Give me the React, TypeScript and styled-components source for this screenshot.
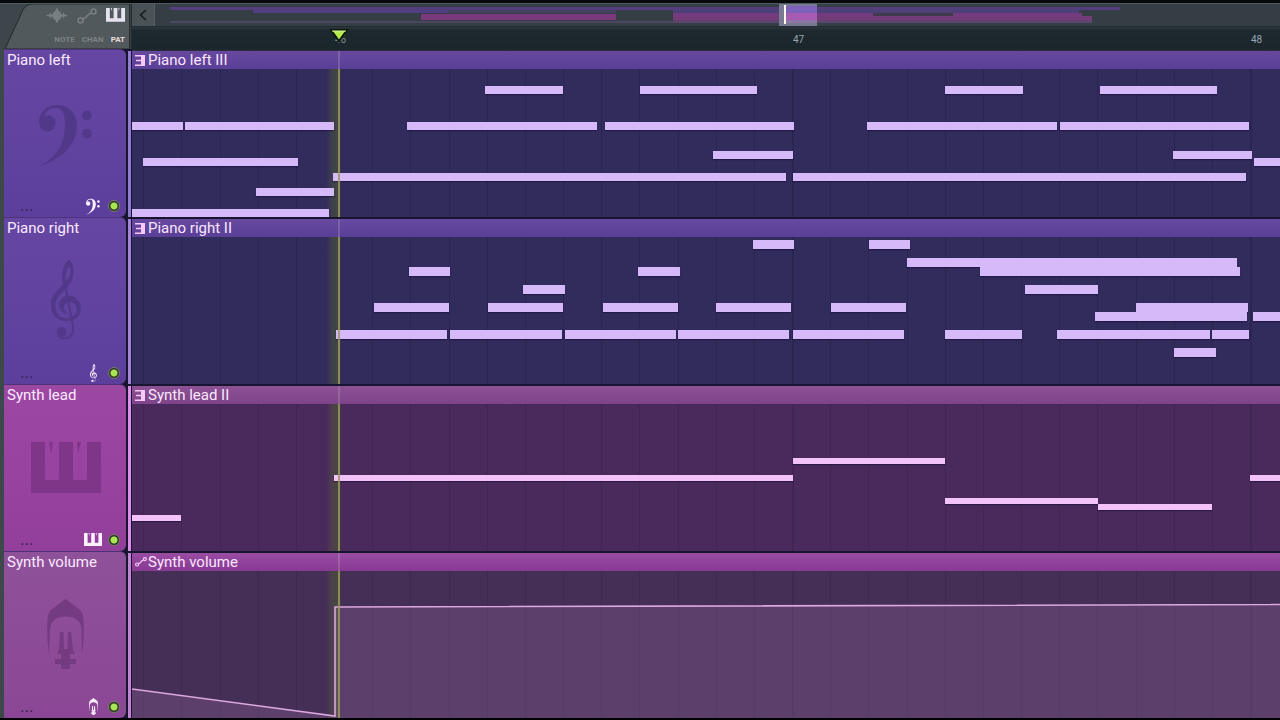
import React from "react";
import styled, { createGlobalStyle } from "styled-components";

const GlobalStyle = createGlobalStyle`
  * { box-sizing: border-box; }
  body {
    margin: 0;
    background: #000;
    font-family: Roboto, "Liberation Sans", sans-serif;
    overflow-x: hidden;
  }
  button { font: inherit; color: inherit; background: none; border: 0; padding: 0; margin: 0; cursor: pointer; }
`;

/* ---------- data ---------- */

type IconName = "bass" | "treble" | "keys" | "bulb";
type Note = [start: number, end: number, top: number];

interface Track {
  name: string;
  clip: string;
  icon: IconName;
  height: number;
  panel: [string, string];
  strip: string;
  head: [string, string];
  body: string;
  line: string;
  mark: string;
  noteColor: string;
  noteHeight: number;
  notes: Note[];
  automation?: boolean;
}

const tracks: Track[] = [
  {
    name: "Piano left", clip: "Piano left III", icon: "bass", height: 168,
    panel: ["#6646a3", "#5c3f9c"], strip: "#8f7bd0", head: ["#67499f", "#5a3f97"],
    body: "#322c5d", line: "#2b2552", mark: "#513889", noteColor: "#d5b9f9", noteHeight: 8,
    notes: [
      [353, 431, 17], [508, 625, 17], [813, 891, 17], [968, 1085, 17],
      [0, 51, 53], [53, 202, 53], [275, 465, 53], [473, 662, 53], [735, 925, 53], [928, 1117, 53],
      [581, 661, 82], [1041, 1120, 82], [11, 166, 89], [1122, 1160, 89],
      [201, 654, 104], [661, 1114, 104], [124, 202, 119], [0, 197, 140],
    ],
  },
  {
    name: "Piano right", clip: "Piano right II", icon: "treble", height: 167,
    panel: ["#6646a3", "#5c3f9c"], strip: "#a384d8", head: ["#67499f", "#5a3f97"],
    body: "#322c5d", line: "#2b2552", mark: "#513889", noteColor: "#d5b9f9", noteHeight: 9,
    notes: [
      [621, 662, 3], [737, 778, 3], [775, 1105, 21], [848, 1108, 30], [277, 318, 30], [506, 548, 30],
      [391, 433, 48], [893, 966, 48], [242, 317, 66], [356, 431, 66], [471, 546, 66], [584, 659, 66],
      [699, 774, 66], [1004, 1116, 66], [963, 1115, 75], [1121, 1160, 75],
      [204, 315, 93], [318, 430, 93], [433, 544, 93], [546, 657, 93], [661, 772, 93], [813, 890, 93],
      [925, 1078, 93], [1080, 1117, 93], [1042, 1084, 111],
    ],
  },
  {
    name: "Synth lead", clip: "Synth lead II", icon: "keys", height: 167,
    panel: ["#9c48a3", "#923e9b"], strip: "#dd8ee6", head: ["#8d5194", "#7e4489"],
    body: "#4a2a5c", line: "#432553", mark: "#7f3689", noteColor: "#f3c2f9", noteHeight: 6,
    notes: [
      [661, 813, 54], [202, 661, 71], [1118, 1160, 71], [813, 966, 94], [966, 1080, 100], [0, 49, 111],
    ],
  },
  {
    name: "Synth volume", clip: "Synth volume", icon: "bulb", height: 167,
    panel: ["#8f519a", "#8b4795"], strip: "#c283d0", head: ["#994ca2", "#883a93"],
    body: "#462f57", line: "#3f294f", mark: "#743b83", noteColor: "#e9b9ee", noteHeight: 6,
    notes: [], automation: true,
  },
];

const BAR = 458;
const FIRST_BAR = 203;
const gridLines = Array.from({ length: 100 }, (_, i) => ({
  x: FIRST_BAR - 1 + Math.round(((i - 5) * BAR) / 12),
  bar: (i - 5) % 12 === 0,
}));

/* ---------- icons ---------- */

const BassIcon = ({ size }: { size: number }) => (
  <svg width={size} height={size * 1.26} viewBox="0 -7 54 68" fill="currentColor" aria-hidden="true">
    <path d="M1 61C18 52 26 39 26 20C26 8 23 3 17 3C11 3 6 6 5 12C7 10.500 9 10 11 10.500C15 11.500 17 15 16.500 19C16 23.500 12.500 26.500 8.500 26.500C3.500 26.500 0 22.500 0 17C0 7 8 0 18 0C30 0 38 8 38 21C38 41 20 55 1 61Z" />
    <circle cx="48" cy="10.500" r="4.800" />
    <circle cx="48" cy="28.500" r="4.800" />
  </svg>
);

const TrebleIcon = ({ size }: { size: number }) => (
  <svg width={size} height={(size * 8) / 3} viewBox="0 0 30 80" aria-hidden="true">
    <path
      fill="currentColor"
      stroke="currentColor"
      strokeWidth="0.800"
      d="M12.500 25C10 13 13 3 18 0C21 3 22.500 8 22 13C21 22 17 26 11 32C7 36 4 40 4 46C4 54 9 58.500 15 58.500C21 58.500 26 55 26 49C26 44 22.500 41.500 18.500 41.500C14.500 41.500 12 45 12.500 48C13 51 14 52 16.500 54C11 53 8 49 8.500 44C9 39 13 36 18 36C25 36 29.500 42 29.500 49C29.500 56 23 60.500 15 60.500C6 60.500 0 54 0 45C0 37 5 32 10 27C15 22 19.500 17 20 12C20 9 19.500 7 18.500 6C15.500 8 14 13 14.500 23Z"
    />
    <path fill="none" stroke="currentColor" strokeWidth="2" d="M13.500 22L22 66C23 74 19 78.500 14 78.500C9 78.500 7 76 7 72" />
    <circle cx="10.500" cy="72" r="4.800" fill="currentColor" />
  </svg>
);

const KeysIcon = ({ size }: { size: number }) => (
  <svg width={size} height={(size * 51) / 70} viewBox="0 0 70 51" fill="currentColor" aria-hidden="true">
    <path d="M0 0H14V38H28V0H42V38H56V0H70V51H0Z" />
    <path d="M18 0H22L20 12ZM46 0H50L47 12Z" />
  </svg>
);

const BulbIcon = ({ size }: { size: number }) => (
  <svg width={size} height={(size * 70) / 37} viewBox="0 0 37 70" fill="currentColor" aria-hidden="true">
    <path d="M18.500 0L33 11Q36 14 36.500 20Q37.500 40 35 55L34.500 30C34 21 27 17.500 18.500 17.500C10 17.500 4 21 3 30L2 55Q-.5 40 .5 20Q1 14 4 11Z" />
    <path d="M13 33H16.500L17 50H20.500L21 33H24L26 50L28 55H23V60H29V65H23V70H14V65H8V60H14V55H10L12 50Z" />
  </svg>
);

const LinkIcon = ({ size, weight = 1.5 }: { size: number; weight?: number }) => (
  <svg width={size} height={(size * 16) / 20} viewBox="0 0 20 16" fill="none" stroke="currentColor" strokeWidth={weight} aria-hidden="true">
    <circle cx="3.500" cy="12.500" r="2.500" />
    <circle cx="16.500" cy="3.500" r="2.500" />
    <path d="M5.500 11L8 10L12 6L14.500 5" />
  </svg>
);

const WaveIcon = () => (
  <svg width="22" height="15" viewBox="0 0 22 16" fill="currentColor" aria-hidden="true">
    <path d="M0 7.500L3 7L4 4.500L5 7L6.500 6.500L8 3L9 4L10 1L11 0L12 1L13 4L14 3L15.500 6.500L17 7L18 4.500L19 7L22 7.500V8.500L19 9L18 11.500L17 9L15.500 9.500L14 13L13 12L12 15L11 16L10 15L9 12L8 13L6.500 9.500L5 9L4 11.500L3 9L0 8.500Z" />
  </svg>
);

const PatternIcon = () => (
  <svg width="10" height="11" viewBox="0 0 10 11" fill="currentColor" aria-hidden="true">
    <path d="M0 0H10V11H0V9.500H6V6.300H1V4.700H6V1.500H0Z" />
  </svg>
);

const icons: Record<IconName, { draw: (p: { size: number }) => React.JSX.Element; large: number; small: number }> = {
  bass: { draw: BassIcon, large: 54, small: 14 },
  treble: { draw: TrebleIcon, large: 30, small: 7 },
  keys: { draw: KeysIcon, large: 70, small: 18 },
  bulb: { draw: BulbIcon, large: 37, small: 9 },
};

/* ---------- top area ---------- */

const Playlist = styled.main`
  border-top: 3px solid #07090a;
  border-bottom: 2px solid #000;
  background: #3d464a;
`;

const Top = styled.header`
  display: flex;
  height: 46px;
  border-top: 1px solid #50595d;
`;

const Corner = styled.div`
  position: relative;
  flex: none;
  width: 132px;
  padding: 4px 6px 0 0;
  border-right: 1px solid #22292d;
`;

const CornerShape = styled.svg`
  position: absolute;
  left: 4px;
  top: 0;
`;

const ToolRow = styled.div`
  position: relative;
  display: flex;
  justify-content: flex-end;
  align-items: flex-start;
  gap: 9px;
  height: 24px;
`;

const Tool = styled.button<{ $on?: boolean }>`
  display: flex;
  color: ${(p) => (p.$on ? "#e6e3f0" : "#787f82")};
`;

const ModeRow = styled(ToolRow)`
  gap: 7px;
  height: 12px;
`;

const Mode = styled.button<{ $on?: boolean }>`
  font-size: 8px;
  line-height: 16px;
  font-weight: 700;
  color: ${(p) => (p.$on ? "#e8dcd8" : "#7c8386")};
`;

const Timeline = styled.div`
  flex: 1;
  min-width: 0;
`;

const Overview = styled.div`
  display: flex;
  height: 23px;
  background: #353e44;
  border-bottom: 1px solid #232c31;
`;

const BackButton = styled.button`
  display: flex;
  flex: none;
  align-items: center;
  justify-content: center;
  width: 23px;
  color: #171d20;
  background: #495256;
  border-right: 1px solid #565f63;
`;

const MiniMap = styled.svg`
  flex: 1;
  min-width: 0;
  height: 22px;
`;

const Ruler = styled.div`
  position: relative;
  height: 24px;
  background: linear-gradient(#2c363b, #1d292f 4px, #1b262b 22px, #2b2f44);
  overflow: hidden;
`;

const BarNumber = styled.span<{ $dim?: boolean }>`
  position: absolute;
  top: 6px;
  font-size: 10px;
  line-height: 14px;
  color: ${(p) => (p.$dim ? "#7f8a93" : "#98a6b2")};
`;

const Marker = styled.svg`
  position: absolute;
  left: 197px;
  top: 1px;
`;

/* ---------- tracks ---------- */

const TrackRow = styled.section<{ $height: number }>`
  display: grid;
  grid-template-columns: 122px 3px minmax(0, 1fr);
  column-gap: 2px;
  min-height: ${(p) => p.$height}px;
  padding-left: 4px;
  background: linear-gradient(90deg, #3d484b 4px, #171530 4px);
`;

const Panel = styled.div<{ $fill: [string, string] }>`
  display: flex;
  flex-direction: column;
  justify-content: space-between;
  padding: 1px 6px 1px 3px;
  border-radius: 0 6px 6px 0;
  border-top: 1px solid #4c3377;
  background: linear-gradient(${(p) => p.$fill[0]}, ${(p) => p.$fill[1]});
`;

const Label = styled.h2`
  margin: 0;
  font-size: 15px;
  line-height: 18px;
  font-weight: 400;
  color: #fbeaff;
`;

const Emblem = styled.div<{ $color: string }>`
  display: flex;
  align-items: center;
  justify-content: center;
  height: 80px;
  padding-left: 4px;
  color: ${(p) => p.$color};
`;

const PanelFoot = styled.div`
  display: grid;
  grid-template-columns: 1fr 20px 12px;
  align-items: center;
  column-gap: 5px;
  height: 20px;
`;

const More = styled.button`
  justify-self: start;
  padding-left: 13px;
  font-family: "Liberation Sans", sans-serif;
  font-size: 16px;
  line-height: 16px;
  color: #3a2358;
`;

const SmallIcon = styled.span`
  display: flex;
  align-items: center;
  justify-content: center;
  color: #fdf0ff;
`;

const Led = styled.button`
  width: 12px;
  height: 12px;
  border-radius: 50%;
  border: 1px solid #777c62;
  background: radial-gradient(circle, #a8e552 0 3px, #2c3328 4px);
`;

const Strip = styled.div<{ $color: string }>`
  margin-top: 2px;
  background: ${(p) => p.$color};
`;

const Clip = styled.article`
  display: flex;
  flex-direction: column;
  margin-left: -1px;
  padding-top: 2px;
  min-width: 0;
`;

const ClipHead = styled.div<{ $fill: [string, string] }>`
  position: relative;
  display: flex;
  flex: none;
  align-items: center;
  height: 18px;
  padding-left: 3px;
  background: linear-gradient(${(p) => p.$fill[0]}, ${(p) => p.$fill[1]});
`;

const ClipButton = styled.button`
  display: flex;
  align-items: center;
  gap: 1px;
  font-size: 15px;
  line-height: 18px;
  color: #fbe6ff;
`;

const ClipIcon = styled.span`
  display: flex;
  align-items: center;
  width: 12px;
  color: #f7c9f8;
`;

const Roll = styled.div<{ $color: string }>`
  position: relative;
  flex: 1;
  overflow: hidden;
  background: ${(p) => p.$color};
`;

const GridLine = styled.i<{ $color: string; $bar: boolean }>`
  position: absolute;
  top: 0;
  bottom: 0;
  width: ${(p) => (p.$bar ? 2 : 1)}px;
  background: ${(p) => p.$color};
`;

const NoteBar = styled.i<{ $color: string; $height: number }>`
  position: absolute;
  height: ${(p) => p.$height}px;
  background: ${(p) => p.$color};
  box-shadow: 0 1px 1px rgba(20, 10, 50, 0.5);
`;

const Curve = styled.svg`
  position: absolute;
  left: 0;
  top: 0;
`;

const PlayGlow = styled.i`
  position: absolute;
  left: 194px;
  top: 0;
  bottom: 0;
  width: 15px;
  background: linear-gradient(90deg, transparent 0, rgba(82, 100, 50, 0.5) 9px, rgba(70, 80, 45, 0.7) 12px, rgba(60, 60, 50, 0.6) 15px);
`;

const PlayLine = styled.i<{ $faint?: boolean }>`
  position: absolute;
  left: 206px;
  top: 0;
  bottom: 0;
  width: 2px;
  background: ${(p) => (p.$faint ? "rgba(200, 180, 190, 0.25)" : "rgba(156, 150, 100, 0.85)")};
`;

const Arrow = () => (
  <svg width="8" height="12" viewBox="0 0 8 12" fill="none" stroke="currentColor" strokeWidth="1.600" aria-hidden="true">
    <path d="M7 1L1.500 6L7 11" />
  </svg>
);

const SongMap = () => (
  <MiniMap viewBox="0 0 1125 22" preserveAspectRatio="none" role="img" aria-label="Song overview">
    <rect x="15" y="3" width="950" height="3" fill="#533f7e" />
    <rect x="98" y="6" width="195" height="3" fill="#523f83" />
    <rect x="293" y="6" width="168" height="3" fill="#44405f" />
    <rect x="266" y="10" width="195" height="6" fill="#7a3a7d" />
    <rect x="15" y="17" width="922" height="2" fill="#4b4662" />
    <rect x="518" y="6" width="406" height="3" fill="#4c4077" />
    <rect x="518" y="9" width="200" height="3" fill="#733c7f" />
    <rect x="798" y="9" width="129" height="3" fill="#733c7f" />
    <rect x="718" y="9" width="80" height="3" fill="#403b4c" />
    <rect x="518" y="12" width="419" height="4" fill="#743b79" />
    <rect x="518" y="16" width="419" height="3" fill="#5e4570" />
    <rect x="624" y="0" width="38" height="22" fill="#777a92" />
    <rect x="631" y="2" width="31" height="7" fill="#7c62bb" />
    <rect x="631" y="9" width="31" height="7" fill="#a75bb3" />
    <rect x="631" y="16" width="31" height="3" fill="#8f74a6" />
    <rect x="629" y="1" width="2" height="19" fill="#fff8e6" />
  </MiniMap>
);

const TrackView = ({ track }: { track: Track }) => {
  const { draw: Icon, large, small } = icons[track.icon];
  return (
    <TrackRow $height={track.height}>
      <Panel $fill={track.panel}>
        <Label>{track.name}</Label>
        <Emblem $color={track.mark}><Icon size={large} /></Emblem>
        <PanelFoot>
          <More aria-label={`${track.name} options`}>...</More>
          <SmallIcon><Icon size={small} /></SmallIcon>
          <Led aria-label={`Mute ${track.name}`} />
        </PanelFoot>
      </Panel>
      <Strip $color={track.strip} />
      <Clip>
        <ClipHead $fill={track.head}>
          <ClipButton>
            <ClipIcon>{track.automation ? <LinkIcon size={12} weight={2} /> : <PatternIcon />}</ClipIcon>
            {track.clip}
          </ClipButton>
          <PlayLine $faint />
        </ClipHead>
        <Roll $color={track.body}>
          {gridLines.map((g) => (
            <GridLine key={g.x} $color={track.line} $bar={g.bar} style={{ left: g.x }} />
          ))}
          <PlayGlow />
          {track.automation && (
            <Curve width="4000" height="147" viewBox="0 0 4000 147" aria-hidden="true">
              <path d="M0 118L203 145V36L4000 26V147H0Z" fill="#a873b0" fillOpacity="0.24" />
              <path d="M0 118L203 145V36L4000 26" fill="none" stroke="#dba8df" strokeWidth="1.600" />
            </Curve>
          )}
          {track.notes.map(([start, end, top]) => (
            <NoteBar
              key={`${start}-${top}`}
              $color={track.noteColor}
              $height={track.noteHeight}
              style={{ left: start, width: end - start, top }}
            />
          ))}
          <PlayLine />
        </Roll>
      </Clip>
    </TrackRow>
  );
};

export default function App() {
  return (
    <>
      <GlobalStyle />
      <Playlist>
        <Top>
          <Corner>
            <CornerShape width="127" height="45" viewBox="0 0 127 46" aria-hidden="true">
              <path d="M0 45L18 6Q21 0 28 0H127V46H0Z" fill="#52595d" stroke="#22292d" />
            </CornerShape>
            <ToolRow>
              <Tool aria-label="Audio clips"><WaveIcon /></Tool>
              <Tool aria-label="Automation clips"><LinkIcon size={20} /></Tool>
              <Tool $on aria-label="Pattern clips"><KeysIcon size={19} /></Tool>
            </ToolRow>
            <ModeRow>
              <Mode>NOTE</Mode>
              <Mode>CHAN</Mode>
              <Mode $on>PAT</Mode>
            </ModeRow>
          </Corner>
          <Timeline>
            <Overview>
              <BackButton aria-label="Scroll back"><Arrow /></BackButton>
              <SongMap />
            </Overview>
            <Ruler>
              {[46, 47, 48].map((n, i) => (
                <BarNumber key={n} $dim={i === 0} style={{ left: FIRST_BAR + i * BAR }}>{n}</BarNumber>
              ))}
              <Marker width="20" height="16" viewBox="0 0 20 16" aria-hidden="true">
                <path d="M2 2H18L10 13Z" fill="#b3ec4c" stroke="#10190c" strokeWidth="2" />
                <path d="M3 3H17" stroke="#dcf8a0" />
              </Marker>
            </Ruler>
          </Timeline>
        </Top>
        {tracks.map((t) => <TrackView key={t.name} track={t} />)}
      </Playlist>
    </>
  );
}
